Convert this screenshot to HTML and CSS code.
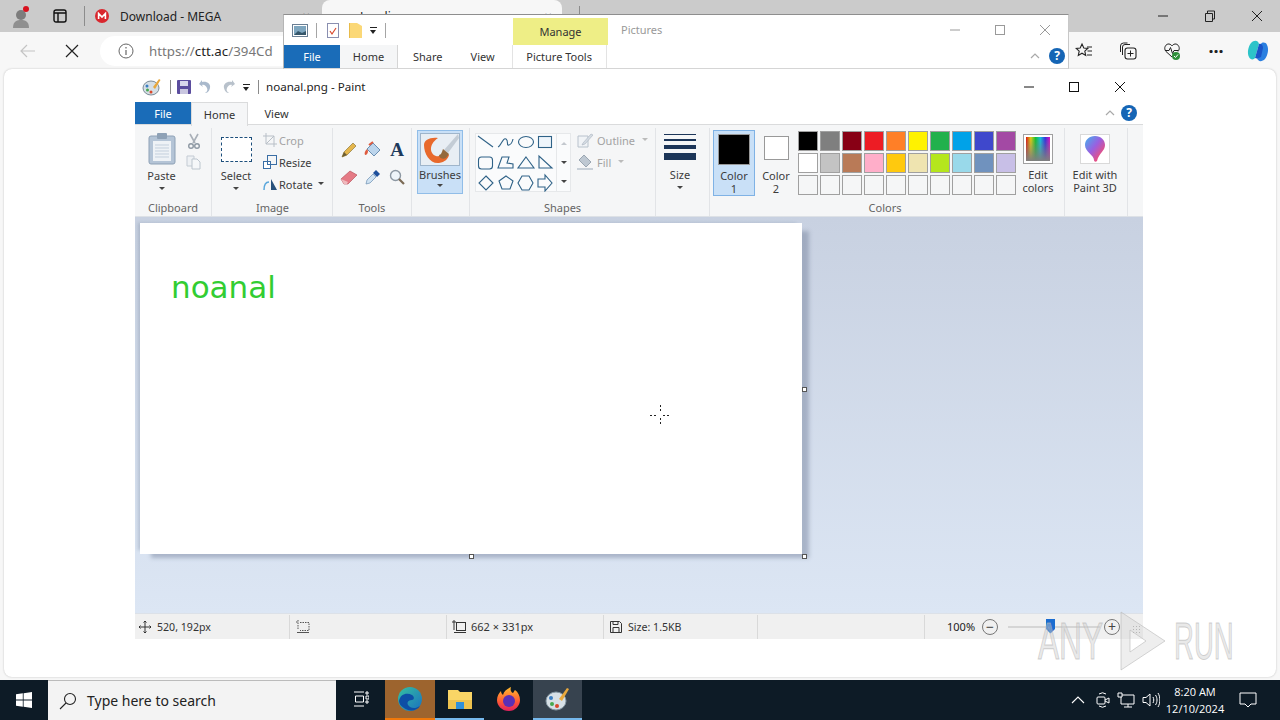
FILE: index.html
```html
<!DOCTYPE html>
<html lang="en">
<head>
  <meta charset="UTF-8">
  <title>noanal.png - Paint</title>
  <link rel="stylesheet" href="styles.css">
</head>
<body>
  <div class="desktop">
    <!-- browser behind everything -->
    <div class="browser">
      <div class="tabstrip">
        <div class="profile">
          <svg width="24" height="24" viewBox="0 0 24 24"><circle cx="11" cy="11" r="5" fill="#7d7d7d"/><path d="M3 24c0-7 4-8 8-8s8 1 8 8z" fill="#8f8f8f"/><circle cx="16" cy="5" r="3" fill="#d8121f"/></svg>
        </div>
        <svg class="vtabs" width="14" height="14" viewBox="0 0 14 14"><rect x="1" y="1" width="12" height="12" rx="2" fill="none" stroke="#111" stroke-width="1.4"/><path d="M1 4h12M5 4v9" stroke="#111" stroke-width="1.4"/></svg>
        <span class="tab-sep first"></span>
        <div class="tab">
          <svg width="14" height="14" viewBox="0 0 14 14"><circle cx="7" cy="7" r="7" fill="#d9272e"/><path d="M3.6 10V4.4L7 8l3.4-3.6V10" fill="none" stroke="#fff" stroke-width="1.6"/></svg>
          <span class="tab-title">Download - MEGA</span>
          <span class="tab-x">✕</span>
        </div>
        <div class="tab active">
          <span class="tab-title">Loading</span>
          <span class="tab-x">✕</span>
        </div>
        <span class="tab-sep"></span>
        <div class="browser-controls">
          <svg width="12" height="12" viewBox="0 0 12 12"><path d="M1 6h10" stroke="#222"/></svg>
          <svg width="12" height="12" viewBox="0 0 12 12"><path d="M1.5 3.5h7v8h-7zM3.5 3.5V1h7v8h-2" fill="none" stroke="#222"/></svg>
          <svg width="12" height="12" viewBox="0 0 12 12"><path d="M1 1l10 10M11 1L1 11" stroke="#222"/></svg>
        </div>
      </div>
      <div class="toolbar">
        <svg class="nav-back" width="16" height="14" viewBox="0 0 16 14"><path d="M15 7H1M7 1L1 7l6 6" fill="none" stroke="#c4c4c4" stroke-width="1.2"/></svg>
        <svg class="nav-stop" width="14" height="14" viewBox="0 0 14 14"><path d="M1 1l12 12M13 1L1 13" stroke="#222" stroke-width="1.2"/></svg>
        <div class="address">
          <svg width="16" height="16" viewBox="0 0 16 16"><circle cx="8" cy="8" r="7" fill="none" stroke="#666"/><path d="M8 7v5M8 4v1.5" stroke="#666" stroke-width="1.2"/></svg>
          <span class="url">https://<b>ctt.ac</b>/394Cd</span>
        </div>
        <div class="toolbar-right">
          <svg width="18" height="18" viewBox="0 0 18 18"><path d="M7 2l1.800 4 4 .4-3 2.800.9 4.200L7 11.200 3.300 13.400l.9-4.200-3-2.800 4-.4zM12 5h5M12.500 9H17M12 13h5" fill="none" stroke="#222" stroke-width="1.1"/></svg>
          <svg width="18" height="18" viewBox="0 0 18 18"><rect x="6" y="6" width="11" height="11" rx="2.5" fill="none" stroke="#222" stroke-width="1.1"/><path d="M11.500 8.500v6M8.500 11.500h6M3.500 13V5a2.500 2.500 0 0 1 2.500-2.500h5M1.500 10V4a3 3 0 0 1 3-3h4" fill="none" stroke="#222"/></svg>
          <svg width="18" height="18" viewBox="0 0 18 18"><path d="M9 15L3 9.500C0 6 3 1.500 6 2c1.500.2 2.500 1.200 3 2 .5-.8 1.500-1.800 3-2 3-.500 6 4 3 7.500" fill="none" stroke="#222"/><path d="M2 8.500h4l1.500-3 2 6 1.500-3h4" fill="none" stroke="#222"/><circle cx="13" cy="14" r="4" fill="#2f8f3a"/><path d="M11 14l1.500 1.500 2.500-3" fill="none" stroke="#fff"/></svg>
          <span class="dots">···</span>
          <svg class="copilot" width="24" height="24" viewBox="0 0 24 24"><path d="M5 4c3-3 7-3 8 1l-4 14c-1 2-5 2-6-1C1 14 2 8 5 4z" fill="#2cc4c9"/><path d="M19 20c-3 3-7 3-8-1l4-14c1-2 5-2 6 1 2 4 1 10-2 14z" fill="#2a7fe0"/><path d="M13 5l-4 14c2 1 4 0 6-1l2-9c0-3-2-5-4-4z" fill="#1a55c8"/></svg>
        </div>
      </div>
      <div class="page"></div>
    </div>

    <!-- explorer window, mostly covered -->
    <div class="explorer">
      <div class="ex-title">
        <div class="ex-quick">
          <svg width="16" height="13" viewBox="0 0 16 13"><rect x=".5" y=".5" width="15" height="12" fill="#fff" stroke="#6a7f94"/><rect x="2" y="2" width="12" height="9" fill="#7ea6bf"/><path d="M2 11l4-4 4 2 4-2v4z" fill="#35566a"/></svg>
          <span class="qsep"></span>
          <svg class="q-check" width="12" height="15" viewBox="0 0 12 15"><rect x=".5" y=".5" width="11" height="14" fill="#fff" stroke="#8a8fb0"/><path d="M3 8l2 3 4-6" fill="none" stroke="#d9492c" stroke-width="1.2"/></svg>
          <svg class="q-folder" width="13" height="16" viewBox="0 0 13 16"><path d="M0 1h8l5 3v12H0z" fill="#fbd877"/><path d="M0 1h1v15H0z" fill="#e8bb4a"/></svg>
          <span class="qdrop"></span>
          <span class="qsep"></span>
        </div>
        <div class="ex-manage">Manage</div>
        <div class="ex-pictures">Pictures</div>
        <div class="win-controls dim">
          <svg width="12" height="12" viewBox="0 0 12 12"><path d="M1 6h10" stroke="#9a9a9a"/></svg>
          <svg width="12" height="12" viewBox="0 0 12 12"><rect x="1.5" y="1.5" width="9" height="9" fill="none" stroke="#9a9a9a"/></svg>
          <svg width="12" height="12" viewBox="0 0 12 12"><path d="M1 1l10 10M11 1L1 11" stroke="#9a9a9a"/></svg>
        </div>
      </div>
      <div class="ex-tabs">
        <span class="file-tab">File</span>
        <span class="ex-tab home">Home</span>
        <span class="ex-tab share">Share</span>
        <span class="ex-tab view">View</span>
        <span class="ex-tab tools">Picture Tools</span>
        <svg class="chev" width="10" height="6" viewBox="0 0 10 6"><path d="M1 5l4-4 4 4" fill="none" stroke="#a9a9a9" stroke-width="1.2"/></svg>
        <span class="help">?</span>
      </div>
    </div>

    <!-- paint window -->
    <div class="paint">
      <div class="titlebar">
        <svg class="app-ico" width="20" height="18" viewBox="0 0 20 18"><ellipse cx="9" cy="10" rx="8" ry="7" fill="#d5dfe6" stroke="#7b8b96"/><circle cx="5" cy="8" r="1.5" fill="#3b7ec2"/><circle cx="5.500" cy="12" r="1.5" fill="#48a84f"/><circle cx="9" cy="14" r="1.5" fill="#d9492c"/><path d="M11 9l6-8 1.500 1L13 11z" fill="#e8a83c"/></svg>
        <span class="tsep first"></span>
        <svg width="14" height="14" viewBox="0 0 14 14"><rect width="14" height="14" rx="1" fill="#5b4d9e"/><rect x="3" y="1" width="8" height="5" fill="#d8d6ec"/><rect x="3" y="9" width="8" height="5" fill="#c9c6e0"/></svg>
        <svg class="ghost" width="14" height="14" viewBox="0 0 14 14"><path d="M3 2c5-1 9 2 8 6s-3 5-5 5c2-1 3-3 2-5S5 4 3 5l1 2-4-3 3-4z" fill="#a9b9cc"/></svg>
        <svg class="ghost" width="14" height="14" viewBox="0 0 14 14"><path d="M11 2C6 1 2 4 3 8s3 5 5 5c-2-1-3-3-2-5s3-4 5-3l-1 2 4-3-3-4z" fill="#b8c1cb"/></svg>
        <span class="qdrop"></span>
        <span class="tsep"></span>
        <span class="title">noanal.png - Paint</span>
        <div class="win-controls">
          <svg width="12" height="12" viewBox="0 0 12 12"><path d="M1 6h10" stroke="#111"/></svg>
          <svg width="12" height="12" viewBox="0 0 12 12"><rect x="1.5" y="1.5" width="9" height="9" fill="none" stroke="#111"/></svg>
          <svg class="close" width="12" height="12" viewBox="0 0 12 12"><path d="M1 1l10 10M11 1L1 11" stroke="#111"/></svg>
        </div>
      </div>
      <div class="tabs">
        <span class="file-tab">File</span>
        <span class="p-tab active">Home</span>
        <span class="p-tab">View</span>
        <svg class="chev" width="10" height="6" viewBox="0 0 10 6"><path d="M1 5l4-4 4 4" fill="none" stroke="#a9a9a9" stroke-width="1.2"/></svg>
        <span class="help">?</span>
      </div>

      <div class="ribbon">
        <section class="group g-clipboard">
          <div class="group-body">
            <div class="big-btn">
              <svg width="28" height="32" viewBox="0 0 28 32"><rect x="1" y="3" width="26" height="28" rx="2" fill="#b4c4d6" stroke="#8ea1b6"/><rect x="5" y="8" width="18" height="20" fill="#eef2f6"/><path d="M7 12h14M7 15h14M7 18h14M7 21h14M7 24h14" stroke="#c3cfdc"/><rect x="9" y="0" width="10" height="6" rx="1" fill="#8ea1b6"/></svg>
              <span class="btn-label">Paste</span>
              <span class="arrow"></span>
            </div>
            <div class="clip-side">
              <svg width="14" height="16" viewBox="0 0 14 16"><path d="M3 1l5 9M11 1L6 10" stroke="#a9b0b8" stroke-width="1.6"/><circle cx="4" cy="13" r="2.3" fill="none" stroke="#8d98a3" stroke-width="1.4"/><circle cx="10" cy="13" r="2.3" fill="none" stroke="#8d98a3" stroke-width="1.4"/></svg>
              <svg width="16" height="15" viewBox="0 0 16 15"><path d="M1 1h7v10H1z" fill="#eef1f4" stroke="#c3cbd3"/><path d="M6 4h5l3 3v7H6z" fill="#f5f7f9" stroke="#bcc5ce"/></svg>
            </div>
          </div>
          <div class="group-label">Clipboard</div>
        </section>

        <section class="group g-image">
          <div class="group-body">
            <div class="big-btn select">
              <span class="select-box"></span>
              <span class="btn-label">Select</span>
              <span class="arrow"></span>
            </div>
            <div class="img-list">
              <div class="img-row off">
                <svg width="14" height="14" viewBox="0 0 14 14"><path d="M3 0v11h11M0 3h11v11M3 11l8-8" fill="none" stroke="#b8bfc7"/></svg>Crop
              </div>
              <div class="img-row">
                <svg width="14" height="14" viewBox="0 0 14 14"><rect x=".5" y="6.5" width="7" height="7" fill="#fff" stroke="#3a6ea5"/><rect x="4.5" y=".5" width="9" height="9" fill="none" stroke="#3a6ea5"/></svg>Resize
              </div>
              <div class="img-row">
                <svg width="14" height="14" viewBox="0 0 14 14"><path d="M8 13V2l6 11z" fill="#27517c"/><path d="M1 13c0-5 2-8 5-8" fill="none" stroke="#5aa7dc" stroke-width="1.5"/></svg>Rotate<span class="arrow inline"></span>
              </div>
            </div>
          </div>
          <div class="group-label">Image</div>
        </section>

        <section class="group g-tools">
          <div class="group-body tool-grid">
            <svg width="16" height="16" viewBox="0 0 16 16"><path d="M1 15l2-5 9-9 3 3-9 9z" fill="#e5b64c" stroke="#8e7a3c" stroke-width=".7"/><path d="M1 15l2-5 3 3z" fill="#6d5d32"/></svg>
            <svg width="18" height="18" viewBox="0 0 18 18"><path d="M9 2l7 7-6 6-7-7z" fill="#bcd5ec" stroke="#6b8fb2"/><path d="M3 8c-2 2-3 4-2 6 2 0 3-2 3-4z" fill="#de5b3f"/><path d="M5 4l4-3" stroke="#de5b3f" stroke-width="2"/></svg>
            <span class="text-tool">A</span>
            <svg width="18" height="16" viewBox="0 0 18 16"><path d="M1 10l9-8 7 4-9 9H4z" fill="#e57a85" stroke="#b9545f" stroke-width=".7"/><path d="M1 10l7 3-1 2H4z" fill="#efb9bd"/></svg>
            <svg width="16" height="16" viewBox="0 0 16 16"><path d="M1 15l1-4 6-6 3 3-6 6z" fill="#cfe2f2" stroke="#6b8fb2" stroke-width=".7"/><path d="M8 4l3-3 4 4-3 3z" fill="#1d4f9c"/></svg>
            <svg width="16" height="16" viewBox="0 0 16 16"><circle cx="6.5" cy="6.5" r="5" fill="#eef4f9" stroke="#8d98a3" stroke-width="1.4"/><path d="M10 10l5 5" stroke="#7b6a55" stroke-width="2.2"/></svg>
          </div>
          <div class="group-label">Tools</div>
        </section>

        <section class="group g-brushes">
          <div class="group-body">
            <div class="brush-btn">
              <span class="brush-ico">
                <svg width="38" height="31" viewBox="0 0 38 31"><path d="M3 11c0 9 6 19 15 18 6-1 9-4 10-8l-5-4c-2 4-5 6-8 5C9 20 7 11 17 4 9 3 3 6 3 11z" fill="#e8692c"/><path d="M37 0L23 16l4 3L38 4z" fill="#c3ccd5"/><path d="M22 15l6 5-3 4c-3 2-7 0-7-3 2 0 3-3 4-6z" fill="#94693c"/></svg>
              </span>
              <span class="btn-label">Brushes</span>
              <span class="arrow"></span>
            </div>
          </div>
          <div class="group-label"></div>
        </section>

        <section class="group g-shapes">
          <div class="group-body">
            <div class="gallery">
              <svg class="gallery-shapes" width="80" height="60" viewBox="0 0 80 60" fill="none" stroke="#2f6287" stroke-width="1.1">
                <path d="M2 4l15 11"/>
                <path d="M22 15c3-1 5-10 8-8s0 7 3 6 4-6 4-6"/>
                <ellipse cx="50" cy="10" rx="7.5" ry="5.5"/>
                <rect x="62.5" y="4.500" width="13" height="11" fill="#eef5fb"/>
                <rect x="2.5" y="25" width="14" height="12" rx="3"/>
                <path d="M22 36l4-11h7l-2 6 6 1v4z"/>
                <path d="M50 25l8 11H42z"/>
                <path d="M63 24v12h13z"/>
                <path d="M10 44l7 7-7 7-7-7z"/>
                <path d="M30 44l7 5-3 8h-8l-3-8z"/>
                <path d="M46 44h7l4 7-4 7h-7l-4-7z"/>
                <path d="M62 47h7v-4l7 8-7 8v-4h-7z"/>
              </svg>
              <div class="gallery-scroll">
                <span class="sc up"></span>
                <span class="sc down"></span>
                <span class="sc more"></span>
              </div>
            </div>
            <div class="shape-opts">
              <div class="opt-row">
                <svg width="16" height="15" viewBox="0 0 16 15"><path d="M1 3h10v11H1z" fill="#f0f3f6" stroke="#b8c2cc"/><path d="M6 10l8-9 2 1-8 9-3 1z" fill="#d5dce3" stroke="#aab4bf" stroke-width=".6"/></svg>Outline<span class="arrow inline off"></span>
              </div>
              <div class="opt-row">
                <svg width="16" height="16" viewBox="0 0 16 16"><path d="M7 1l7 7-5 5-7-7z" fill="#bec8d2" stroke="#9aa6b2"/><path d="M0 15h16" stroke="#c8d0d8" stroke-width="2"/></svg>Fill<span class="arrow inline off"></span>
              </div>
            </div>
          </div>
          <div class="group-label">Shapes</div>
        </section>

        <section class="group g-size">
          <div class="group-body">
            <div class="big-btn size">
              <span class="size-lines"><i class="l1"></i><i class="l2"></i><i class="l3"></i><i class="l4"></i></span>
              <span class="btn-label">Size</span>
              <span class="arrow"></span>
            </div>
          </div>
          <div class="group-label"></div>
        </section>

        <section class="group g-colors">
          <div class="group-body">
            <div class="color-btn active">
              <span class="swatch-big black"></span>
              <span class="btn-label">Color<br>1</span>
            </div>
            <div class="color-btn">
              <span class="swatch-big white"></span>
              <span class="btn-label">Color<br>2</span>
            </div>
            <div class="palette">
              <i class="p-black"></i><i class="p-gray"></i><i class="p-maroon"></i><i class="p-red"></i><i class="p-orange"></i><i class="p-yellow"></i><i class="p-green"></i><i class="p-cyan"></i><i class="p-indigo"></i><i class="p-purple"></i>
              <i class="p-white"></i><i class="p-silver"></i><i class="p-brown"></i><i class="p-pink"></i><i class="p-gold"></i><i class="p-cream"></i><i class="p-lime"></i><i class="p-sky"></i><i class="p-steel"></i><i class="p-lilac"></i>
              <i></i><i></i><i></i><i></i><i></i><i></i><i></i><i></i><i></i><i></i>
            </div>
            <div class="edit-colors">
              <span class="rainbow-box"><span class="rainbow"></span></span>
              <span class="btn-label">Edit<br>colors</span>
            </div>
          </div>
          <div class="group-label colors-label">Colors</div>
        </section>

        <section class="group g-3d">
          <div class="group-body">
            <div class="edit-3d">
              <span class="box-3d">
                <svg width="22" height="28" viewBox="0 0 22 28"><defs><linearGradient id="drop" x1="0" y1="0" x2="1" y2="1"><stop offset="0" stop-color="#3fb4ee"/><stop offset=".45" stop-color="#9a5fe0"/><stop offset=".8" stop-color="#ee4f7a"/><stop offset="1" stop-color="#f5a623"/></linearGradient></defs><path d="M11 1c6 0 10 4 10 9 0 6-6 8-8 16-1 1-3 1-3-1 0-5-9-8-9-15C1 5 5 1 11 1z" fill="url(#drop)"/></svg>
              </span>
              <span class="btn-label">Edit with<br>Paint 3D</span>
            </div>
          </div>
          <div class="group-label"></div>
        </section>
      </div>

      <div class="workspace">
        <div class="canvas"><span class="canvas-text">noanal</span></div>
        <span class="handle h-right"></span>
        <span class="handle h-bottom"></span>
        <span class="handle h-corner"></span>
        <svg class="crosshair" width="21" height="21" viewBox="0 0 21 21"><path d="M10.5 0v8M10.5 13v8M0 10.5h8M13 10.5h8" stroke="#222" stroke-dasharray="2 2"/></svg>
      </div>

      <div class="statusbar">
        <div class="st st-pos">
          <svg width="12" height="12" viewBox="0 0 12 12"><path d="M6 0v12M0 6h12M4.500 1.500L6 0l1.500 1.500M4.500 10.500L6 12l1.500-1.500M1.500 4.500L0 6l1.500 1.500M10.500 4.500L12 6l-1.500 1.500" fill="none" stroke="#333"/></svg>520, 192px
        </div>
        <div class="st st-sel">
          <svg width="14" height="14" viewBox="0 0 14 14"><path d="M2 0v10M0 2h2M4 2.500h9v8H4" fill="none" stroke="#555" stroke-dasharray="1.5 1"/><path d="M1 12.500h12" stroke="#555"/></svg>
        </div>
        <div class="st st-dim">
          <svg width="14" height="14" viewBox="0 0 14 14"><path d="M2 0v10M0 2h4" fill="none" stroke="#333"/><rect x="4.5" y="2.5" width="9" height="8" fill="none" stroke="#333"/><path d="M2 12.500h12" stroke="#333"/></svg>662 × 331px
        </div>
        <div class="st st-size">
          <svg width="12" height="12" viewBox="0 0 12 12"><path d="M.5.5h9l2 2v9H.5z" fill="none" stroke="#333"/><path d="M3 .5v3h5v-3M3 11.500v-5h6v5" fill="none" stroke="#333"/></svg>Size: 1.5KB
        </div>
        <div class="st st-blank"></div>
        <div class="zoom">
          <span class="zoom-pct">100%</span>
          <span class="zoom-btn">−</span>
          <span class="slider"><span class="thumb"></span></span>
          <span class="zoom-btn">+</span>
          <span class="grip"></span>
        </div>
      </div>
    </div>

    <!-- watermark -->
    <div class="watermark">
      <span class="wm-text any">ANY</span>
      <svg width="46" height="60" viewBox="0 0 46 60"><path d="M1 1l44 29L1 59zM10 19l16 11-16 11z" fill="rgba(205,205,205,.35)" fill-rule="evenodd" stroke="rgba(185,185,185,.6)"/></svg>
      <span class="wm-text run">RUN</span>
    </div>

    <!-- taskbar -->
    <div class="taskbar">
      <div class="start">
        <svg width="16" height="16" viewBox="0 0 16 16"><path d="M0 2.200L6.800 1.300V7.600H0zM7.600 1.200L16 0V7.600H7.600zM0 8.400H6.800V14.700L0 13.800zM7.600 8.400H16V16L7.600 14.800z" fill="#fff"/></svg>
      </div>
      <div class="search">
        <svg width="18" height="18" viewBox="0 0 18 18"><circle cx="11" cy="7" r="5.5" fill="none" stroke="#222" stroke-width="1.1"/><path d="M7 11l-6 6" stroke="#222" stroke-width="1.1"/></svg>
        <span>Type here to search</span>
      </div>
      <div class="task-item">
        <svg width="16" height="16" viewBox="0 0 16 16"><path d="M1 1h10M1 15h10M2.500 5h8v6h-8zM13 5h3v3h-3zM13 10h2v2h-2zM13 1h2v2h-2z" fill="none" stroke="#fff"/></svg>
      </div>
      <div class="task-item edge">
        <svg width="26" height="26" viewBox="0 0 26 26"><defs><linearGradient id="edgeg" x1="0" y1="0" x2="1" y2="1"><stop offset="0" stop-color="#35c1a0"/><stop offset="1" stop-color="#1a6fc0"/></linearGradient></defs><circle cx="13" cy="13" r="12" fill="url(#edgeg)"/><path d="M2 15c1-7 8-9 13-6 3 2 2 5 0 5-5 0-6 4-2 7 3 2 7 1 10-1-3 5-11 6-16 2-3-2-5-4-5-7z" fill="#0d4ea6"/></svg>
      </div>
      <div class="task-item open">
        <svg width="26" height="24" viewBox="0 0 26 24"><path d="M1 3h10l2 2h12v17H1z" fill="#f9d566"/><rect x="1" y="13" width="24" height="9" fill="#edc24d"/><rect x="9" y="15" width="8" height="7" fill="#2f8fd8"/></svg>
      </div>
      <div class="task-item">
        <svg width="26" height="26" viewBox="0 0 26 26"><defs><linearGradient id="foxg" x1="0" y1="0" x2="0" y2="1"><stop offset="0" stop-color="#ffbd2e"/><stop offset=".6" stop-color="#ff5a36"/><stop offset="1" stop-color="#e0205e"/></linearGradient></defs><path d="M13 25C6 25 1 20 1 14 1 10 3 7 5 5c0 2 1 3 2 4 1-4 4-6 8-8-1 3 0 5 2 6 1-1 1-2 2-3 3 2 5 6 5 10 0 6-5 11-11 11z" fill="url(#foxg)"/><circle cx="13" cy="15" r="6" fill="#5b2fb5"/></svg>
      </div>
      <div class="task-item open current">
        <svg width="26" height="24" viewBox="0 0 26 24"><ellipse cx="11" cy="14" rx="10" ry="9" fill="#d7e0e6" stroke="#8496a2"/><circle cx="6" cy="11" r="2" fill="#3b7ec2"/><circle cx="7" cy="17" r="2" fill="#48a84f"/><circle cx="12" cy="19" r="2" fill="#d9492c"/><path d="M14 12l8-11 2 1-7 12z" fill="#e8a83c"/></svg>
      </div>
      <div class="tray">
        <svg width="14" height="8" viewBox="0 0 14 8"><path d="M1 7l6-6 6 6" fill="none" stroke="#fff" stroke-width="1.1"/></svg>
        <svg class="tray-cam" width="14" height="16" viewBox="0 0 14 16"><rect x="1" y="5" width="8" height="7" rx="1" fill="none" stroke="#fff"/><path d="M9 8l4-2v5l-4-2M3 2a6 6 0 0 1 7 0M3 14a6 6 0 0 0 7 0" fill="none" stroke="#fff"/></svg>
        <svg width="18" height="16" viewBox="0 0 18 16"><path d="M1 1h4v4H1zM5 3h12v9H4V5M11 12v3M7 15h8" fill="none" stroke="#fff"/></svg>
        <svg width="18" height="16" viewBox="0 0 18 16"><path d="M1 5.500h3L8 2v12L4 10.500H1zM11 5c1 2 1 4 0 6M13.500 3c2 3 2 7 0 10M16 1c2.500 4 2.500 10 0 14" fill="none" stroke="#fff"/></svg>
        <div class="clock">8:20 AM<br>12/10/2024</div>
        <svg class="notif" width="18" height="16" viewBox="0 0 18 16"><path d="M1 1h16v11h-5l-3 3-3-3H1z" fill="none" stroke="#fff"/></svg>
      </div>
    </div>
  </div>
</body>
</html>
```

FILE: styles.css
```css
* {
  box-sizing: border-box;
}
body {
  margin: 0;
  font-family: 'Noto Sans', 'Open Sans', sans-serif;
  font-size: 11px;
  color: #3c3c3c;
  background: #fff;
}
.desktop {
  position: relative;
  width: 1280px;
  height: 720px;
  overflow: hidden;
  background: #fff;
}

/* browser */
.browser {
  display: flex;
  flex-direction: column;
  height: 680px;
  background: #f7f7f7;
}
.tabstrip {
  display: flex;
  align-items: center;
  height: 32px;
  background: #cbcbcb;
}
.profile {
  width: 46px;
  padding-left: 10px;
  display: flex;
}
.vtabs {
  margin-left: 7px;
}
.tab-sep {
  width: 1px;
  height: 20px;
  background: #8c8c8c;
  margin-left: 17px;
}
.tab-sep.first {
  margin-right: 10px;
}
.tab {
  display: flex;
  align-items: center;
  flex: none;
  width: 215px;
  height: 32px;
  gap: 11px;
  font-size: 12px;
  color: #222;
}
.tab-x {
  font-size: 10px;
  margin-left: auto;
}
.tab.active {
  background: #f7f7f7;
  width: 240px;
  margin-left: 12px;
  border-radius: 8px 8px 0 0;
  padding: 0 10px 0 38px;
}
.browser-controls {
  margin-left: auto;
  display: flex;
  gap: 35px;
  padding-right: 17px;
}
.toolbar {
  display: flex;
  align-items: center;
  height: 37px;
}
.nav-back {
  margin-left: 20px;
}
.nav-stop {
  margin-left: 29px;
}
.address {
  display: flex;
  align-items: center;
  gap: 15px;
  width: 400px;
  height: 30px;
  margin-left: 21px;
  padding-left: 18px;
  background: #fff;
  border-radius: 15px;
}
.url {
  font-size: 13.3px;
  color: #777;
}
.url b {
  font-weight: 400;
  color: #222;
}
.toolbar-right {
  margin-left: auto;
  display: flex;
  align-items: center;
  gap: 26px;
  padding-right: 10px;
}
.copilot {
  margin-left: -5px;
}
.dots {
  font-size: 18px;
  font-weight: 700;
  color: #222;
  width: 18px;
  text-align: center;
}
.page {
  flex: 1;
  margin: 0 4px 3px;
  background: #fff;
  border-radius: 8px;
  box-shadow: 0 0 2px #bbb;
}

/* explorer window */
.explorer {
  position: absolute;
  left: 283px;
  top: 14px;
  width: 786px;
  height: 55px;
  background: #fff;
  border: 1px solid #8e8e8e;
  border-bottom: 1px solid #d5d5d5;
  border-left-color: #b5b5b5;
  border-right-color: #c8c8c8;
}
.ex-title {
  display: flex;
  height: 30px;
  position: relative;
}
.ex-quick {
  display: flex;
  align-items: center;
  gap: 8px;
  padding-left: 8px;
  width: 229px;
}
.q-check,
.q-folder {
  margin-left: 2px;
}
.qsep {
  width: 1px;
  height: 15px;
  background: #a5a5a5;
}
.qdrop {
  width: 7px;
  height: 6px;
  border-top: 1px solid #222;
  position: relative;
}
.qdrop::after {
  content: "";
  position: absolute;
  left: 0;
  top: 2px;
  border: 3.5px solid transparent;
  border-top: 4px solid #222;
  border-bottom: 0;
}
.ex-manage {
  width: 95px;
  margin-top: 3px;
  height: 27px;
  line-height: 28px;
  background: #eeee86;
  text-align: center;
  color: #333;
}
.ex-pictures {
  margin-left: 13px;
  line-height: 29px;
  color: #999;
}
.win-controls {
  display: flex;
  gap: 33px;
  margin-left: auto;
  align-items: center;
}
.win-controls.dim {
  padding-right: 17px;
}
.ex-tabs {
  display: flex;
  align-items: stretch;
  height: 23px;
  line-height: 23px;
  color: #333;
  position: relative;
}
.file-tab {
  background: #1a6cb8;
  color: #fff;
  width: 56px;
  text-align: center;
}
.ex-tab.home {
  width: 58px;
  background: #f5f6f7;
  text-align: center;
  border-right: 1px solid #d5d5d5;
}
.ex-tab.share {
  margin-left: 15px;
}
.ex-tab.view {
  margin-left: 28px;
}
.ex-tab.tools {
  margin-left: 17px;
  width: 95px;
  text-align: center;
  border-left: 1px solid #e3e3e3;
  border-right: 1px solid #e3e3e3;
}
.chev {
  position: absolute;
  right: 28px;
  top: 8px;
}
.help {
  position: absolute;
  right: 3px;
  top: 3px;
  width: 16px;
  height: 16px;
  border-radius: 50%;
  background: #1565b5;
  color: #fff;
  font-size: 12px;
  font-weight: 700;
  line-height: 16px;
  text-align: center;
}

/* paint window */
.paint {
  position: absolute;
  left: 135px;
  top: 72px;
  width: 1008px;
  height: 567px;
  display: flex;
  flex-direction: column;
  background: #fff;
}
.titlebar {
  display: flex;
  align-items: center;
  height: 30px;
  gap: 8px;
  padding-left: 7px;
}
.tsep {
  width: 1px;
  height: 14px;
  background: #8a8a8a;
}
.tsep.first {
  margin-right: -2px;
}
.title {
  font-size: 11.6px;
  margin: -2px 0 0 -1px;
  color: #222;
}
.titlebar .win-controls {
  padding-right: 17px;
}
.titlebar .close {
  margin-left: 1px;
}
.tabs {
  display: flex;
  height: 23px;
  line-height: 24px;
  position: relative;
  color: #333;
  border-bottom: 1px solid #dadbdc;
}
.tabs .help {
  right: 6px;
}
.tabs .file-tab {
  width: 56px;
}
.p-tab {
  width: 57px;
  text-align: center;
}
.p-tab.active {
  background: #f5f6f7;
  height: 24px;
  border: 1px solid #dadbdc;
  border-bottom: 0;
}
.ribbon {
  display: flex;
  height: 92px;
  background: #f5f6f7;
  border-bottom: 1px solid #dde1e6;
  padding-top: 3px;
}
.group {
  display: flex;
  flex-direction: column;
  flex: none;
  height: 88px;
  border-right: 1px solid #e2e4e7;
}
.group-body {
  display: flex;
  height: 73px;
}
.group-label {
  height: 15px;
  line-height: 14px;
  text-align: center;
  color: #646464;
}
.btn-label {
  display: block;
  line-height: 13px;
  text-align: center;
  color: #3c3c3c;
}
.arrow {
  display: block;
  width: 0;
  height: 0;
  margin: 5px auto 0;
  border: 3px solid transparent;
  border-top: 3px solid #444;
  border-bottom: 0;
}
.arrow.inline {
  display: inline-block;
  margin: 0 0 2px 3px;
  vertical-align: middle;
}
.arrow.off {
  border-top-color: #bbb;
}
.big-btn {
  display: flex;
  flex-direction: column;
  align-items: center;
}
.g-clipboard {
  width: 77px;
}
.g-clipboard .big-btn {
  width: 52px;
  padding: 5px 0 0 1px;
}
.g-clipboard .btn-label {
  margin-top: 4px;
}
.clip-side {
  display: flex;
  flex-direction: column;
  align-items: center;
  gap: 6px;
  padding-top: 5px;
  width: 14px;
}
.g-image {
  width: 121px;
  padding-left: 1px;
}
.big-btn.select {
  width: 46px;
  padding-top: 9px;
}
.select-box {
  width: 31px;
  height: 25px;
  border: 1px dashed #1d4f7c;
  background: #fff;
}
.select .btn-label {
  margin-top: 7px;
}
.img-list {
  display: flex;
  flex-direction: column;
  gap: 4px;
  padding: 3px 0 0 4px;
}
.img-row {
  display: flex;
  align-items: center;
  gap: 2px;
  height: 18px;
}
.img-row.off,
.opt-row {
  color: #a3a3a3;
}
.img-row svg {
  width: 14px;
}
.g-tools {
  width: 79px;
}
.tool-grid {
  display: grid;
  grid-template-columns: repeat(3, 24px);
  grid-auto-rows: 27px;
  place-items: center;
  padding: 8px 0 0 4px;
}
.text-tool {
  font-family: 'Liberation Serif', serif;
  font-weight: 700;
  font-size: 19px;
  line-height: 20px;
  color: #1d3a5c;
}
.g-brushes {
  width: 58px;
}
.brush-btn {
  width: 46px;
  height: 64px;
  margin: 2px 0 0 5px;
  background: #c9e0f7;
  border: 1px solid #90bde8;
  display: flex;
  flex-direction: column;
  align-items: center;
}
.brush-ico {
  width: 40px;
  height: 33px;
  margin-top: 2px;
  background: #e8eef4;
  border: 1px solid #9fb5cb;
  display: flex;
  align-items: center;
  justify-content: center;
}
.brush-btn .btn-label {
  margin-top: 2px;
}
.brush-btn .arrow {
  margin-top: 3px;
}
.g-shapes {
  width: 186px;
}
.g-shapes .group-body {
  padding: 5px 0 0 5px;
}
.gallery {
  display: flex;
  width: 96px;
  height: 59px;
  background: #fafbfc;
  border: 1px solid #e6e8ea;
}
.gallery-shapes {
  flex: none;
  margin-top: -2px;
}
.gallery-scroll {
  flex: 1;
  display: flex;
  flex-direction: column;
  justify-content: space-around;
  align-items: center;
  border-left: 1px solid #e6e8ea;
}
.sc {
  width: 0;
  height: 0;
  border: 3px solid transparent;
}
.sc.up {
  border-bottom: 3px solid #c3c8ce;
  border-top: 0;
}
.sc.down {
  border-top: 3px solid #444;
  border-bottom: 0;
}
.sc.more {
  border-top: 3px solid #444;
  border-bottom: 0;
  box-shadow: 0 -3px 0 -2px #444;
}
.shape-opts {
  display: flex;
  flex-direction: column;
  gap: 4px;
  margin-top: -2px;
  padding-left: 6px;
}
.opt-row {
  display: flex;
  align-items: center;
  gap: 4px;
  height: 18px;
}
.g-size {
  width: 54px;
}
.big-btn.size {
  width: 46px;
  padding: 6px 0 0 2px;
}
.size-lines {
  display: flex;
  flex-direction: column;
  gap: 4px;
  width: 32px;
  height: 34px;
}
.size-lines i {
  display: block;
  background: #1c3558;
}
.l1 {
  height: 1px;
}
.l2 {
  height: 2px;
}
.l3 {
  height: 4px;
}
.l4 {
  height: 7px;
}
.g-colors {
  width: 355px;
}
.g-colors .group-body {
  padding-left: 3px;
}
.colors-label {
  padding-right: 4px;
}
.color-btn {
  width: 42px;
  height: 66px;
  margin-top: 2px;
  display: flex;
  flex-direction: column;
  align-items: center;
  border: 1px solid transparent;
}
.color-btn.active {
  background: #c9e0f7;
  border-color: #7fb2e5;
}
.swatch-big {
  display: block;
  border: 1px solid #999;
}
.swatch-big.black {
  width: 32px;
  height: 32px;
  margin-top: 3px;
  background: #000;
}
.swatch-big.white {
  width: 25px;
  height: 25px;
  margin: 5px 0;
  background: #fff;
}
.color-btn .btn-label {
  margin-top: 4px;
}
.palette {
  display: grid;
  grid-template-columns: repeat(10, 20px);
  grid-auto-rows: 20px;
  gap: 2px;
  margin: 3px 0 0 1px;
  height: 64px;
}
.palette i {
  display: block;
  background: #f5f6f7;
  border: 1px solid #a0a0a0;
}
.palette .p-black { background: #000; }
.palette .p-gray { background: #7f7f7f; }
.palette .p-maroon { background: #880015; }
.palette .p-red { background: #ed1c24; }
.palette .p-orange { background: #ff7f27; }
.palette .p-yellow { background: #fff200; }
.palette .p-green { background: #22b14c; }
.palette .p-cyan { background: #00a2e8; }
.palette .p-indigo { background: #3f48cc; }
.palette .p-purple { background: #a349a4; }
.palette .p-white { background: #fff; }
.palette .p-silver { background: #c3c3c3; }
.palette .p-brown { background: #b97a57; }
.palette .p-pink { background: #ffaec9; }
.palette .p-gold { background: #ffc90e; }
.palette .p-cream { background: #efe4b0; }
.palette .p-lime { background: #b5e61d; }
.palette .p-sky { background: #99d9ea; }
.palette .p-steel { background: #7092be; }
.palette .p-lilac { background: #c8bfe7; }
.edit-colors {
  width: 40px;
  margin-left: 2px;
  display: flex;
  flex-direction: column;
  align-items: center;
  padding-top: 6px;
}
.rainbow-box {
  width: 30px;
  height: 30px;
  padding: 2px;
  background: #fff;
  border: 1px solid #a0a0a0;
}
.rainbow {
  display: block;
  height: 100%;
  background: linear-gradient(to bottom, transparent, #7f7f7f), linear-gradient(to right, #e01010, #e0d010, #10c030, #10c0e0, #3030e0, #e010c0);
}
.edit-colors .btn-label {
  margin-top: 4px;
}
.g-3d {
  width: 63px;
}
.edit-3d {
  width: 60px;
  display: flex;
  flex-direction: column;
  align-items: center;
  padding-top: 6px;
}
.box-3d {
  width: 30px;
  height: 30px;
  display: flex;
  align-items: center;
  justify-content: center;
  background: #fff;
  border: 1px solid #d9d9d9;
}
.edit-3d .btn-label {
  margin-top: 4px;
}
.workspace {
  position: relative;
  flex: 1;
  padding: 6px 0 0 5px;
  background: linear-gradient(#c8d1e1, #dce6f4);
}
.canvas {
  width: 662px;
  height: 331px;
  padding: 42px 0 0 31px;
  background: #fff;
  box-shadow: 9px 6px 4px -2px rgba(110, 125, 150, .45), -4px -2px 3px -2px rgba(110, 125, 150, .3);
}
.canvas-text {
  font-family: 'DejaVu Sans', sans-serif;
  font-size: 31px;
  line-height: 44px;
  color: #32cd32;
}
.handle {
  position: absolute;
  width: 5px;
  height: 5px;
  background: #fff;
  border: 1px solid #555;
}
.h-right {
  left: 667px;
  top: 170px;
}
.h-bottom {
  left: 334px;
  top: 337px;
}
.h-corner {
  left: 667px;
  top: 337px;
}
.crosshair {
  position: absolute;
  left: 515px;
  top: 188px;
}
.statusbar {
  display: flex;
  align-items: center;
  height: 26px;
  background: #f0f0f0;
  border-top: 1px solid #dce1e8;
  color: #333;
}
.st {
  display: flex;
  align-items: center;
  gap: 7px;
  height: 24px;
  border-right: 1px solid #d9d9d9;
  padding-left: 4px;
}
.st-pos {
  width: 155px;
  gap: 6px;
  font-size: 10.6px;
}
.st-sel {
  width: 157px;
  padding-left: 6px;
}
.st-dim {
  width: 157px;
  padding-left: 5px;
  gap: 5px;
}
.st-size {
  width: 154px;
  padding-left: 6px;
  gap: 6px;
  font-size: 10.6px;
}
.st-blank {
  width: 167px;
}
.zoom {
  display: flex;
  align-items: center;
  padding-left: 22px;
}
.zoom-pct {
  width: 35px;
  color: #222;
}
.zoom-btn {
  width: 16px;
  height: 16px;
  border-radius: 50%;
  border: 1px solid #777;
  line-height: 13px;
  text-align: center;
  font-size: 14px;
  color: #444;
}
.slider {
  position: relative;
  width: 92px;
  height: 2px;
  margin: 0 4px 0 10px;
  background: #d5d5d5;
}
.thumb {
  position: absolute;
  left: 38px;
  top: -7px;
  width: 9px;
  height: 15px;
  background: #1a6cd0;
  clip-path: polygon(0 0, 100% 0, 100% 70%, 50% 100%, 0 70%);
}
.grip {
  width: 8px;
  height: 8px;
  margin: 4px 0 0 12px;
  background: radial-gradient(circle, #aaa 1px, transparent 1px) 0 0 / 3px 3px;
}

/* watermark */
.watermark {
  position: absolute;
  left: 1038px;
  top: 610px;
  display: flex;
  align-items: center;
  pointer-events: none;
}
.wm-text {
  font-family: 'Liberation Sans', sans-serif;
  font-size: 51px;
  line-height: 60px;
  color: rgba(205, 205, 205, .45);
  -webkit-text-stroke: 1px rgba(180, 180, 180, .6);
  display: inline-block;
  transform-origin: left center;
  white-space: nowrap;
  padding-top: 2px;
}
.wm-text.any {
  width: 82px;
  transform: scaleX(.62);
}
.wm-text.run {
  width: 60px;
  margin-left: 8px;
  transform: scaleX(.54);
}

/* taskbar */
.taskbar {
  position: absolute;
  left: 0;
  top: 680px;
  width: 1280px;
  height: 40px;
  display: flex;
  background: #0d1b26;
  color: #fff;
}
.start {
  width: 48px;
  display: flex;
  align-items: center;
  justify-content: center;
}
.search {
  width: 288px;
  display: flex;
  align-items: center;
  gap: 10px;
  padding-left: 11px;
  background: #f3f3f3;
  color: #222;
  font-size: 14px;
  border-top: 1px solid #bbb;
}
.task-item {
  width: 49px;
  display: flex;
  align-items: center;
  justify-content: center;
  border-bottom: 2px solid transparent;
}
.task-item.edge {
  width: 50px;
  background: #9d642e;
  border-bottom-color: #f0780a;
}
.task-item.open {
  border-bottom-color: #76b9ed;
}
.task-item.current {
  background: #37434f;
}
.tray {
  margin-left: auto;
  display: flex;
  align-items: center;
  gap: 7px;
}
.tray-cam {
  margin-left: 4px;
}
.clock {
  width: 66px;
  margin-left: -5px;
  font-family: 'Open Sans', sans-serif;
  font-size: 11px;
  line-height: 17px;
  text-align: center;
}
.notif {
  margin: 0 23px 0 4px;
}
```
